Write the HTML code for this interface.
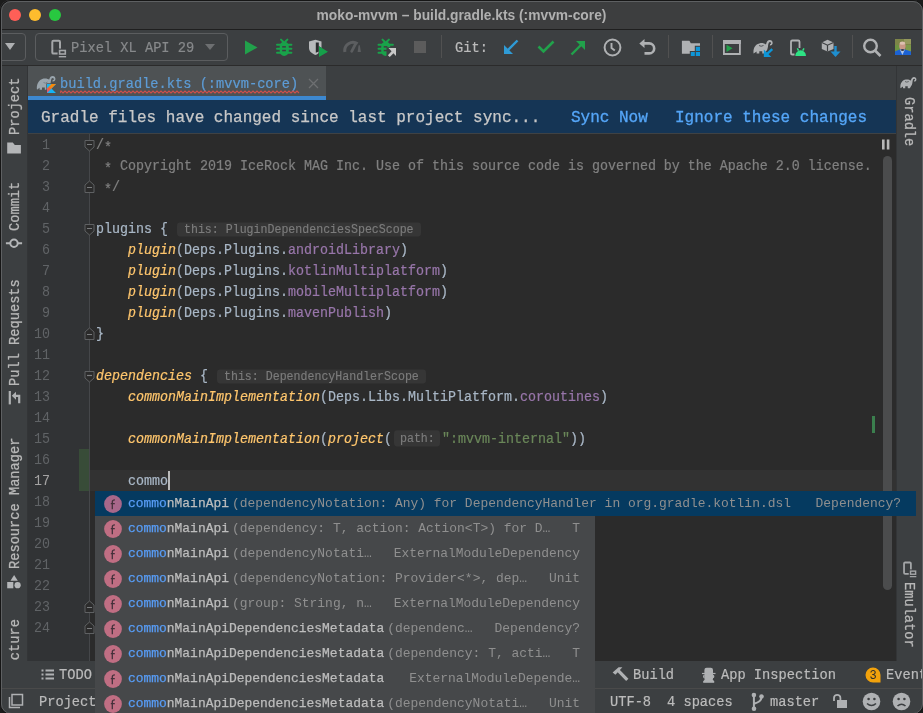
<!DOCTYPE html>
<html><head><meta charset="utf-8">
<style>
*{margin:0;padding:0;box-sizing:border-box}
html,body{width:923px;height:713px;overflow:hidden;background:#1c1c1c}
body{position:relative;font-family:"Liberation Mono",monospace;}
.a{position:absolute}
#win{will-change:transform;position:absolute;left:0;top:0;width:923px;height:713px;background:#3c3f41;border-radius:10px;overflow:hidden}
#wborder{position:absolute;left:1px;top:1px;width:922px;height:713px;border-radius:10px;border:1.5px solid #5e6062;box-shadow:0 0 0 1px #161616}
#title{left:0;top:0;width:923px;height:29px;background:#3d3e3f}
#titlesep{left:0;top:29px;width:923px;height:1px;background:#1f1f1f}
.tl{width:12px;height:12px;border-radius:50%;top:9px}
#ttext{left:0;top:7.5px;width:923px;text-align:center;font-family:"Liberation Sans",sans-serif;font-weight:bold;font-size:13.8px;color:#b0b0b0;letter-spacing:0}
#toolbar{left:0;top:30px;width:923px;height:35px;background:#3c3f41}
#tbsep{left:0;top:65px;width:923px;height:1px;background:#2b2b2b}
.combo{border:1px solid #5b5d5f;border-radius:4px;top:33px;height:28px}
.ui{font-family:"Liberation Mono",monospace;font-size:13.7px;white-space:pre;transform:scaleY(1.1);transform-origin:0 13px;-webkit-text-stroke:0.2px}
.vsep{width:1px;background:#515151}
/* stripes */
#lstripe{left:0;top:66px;width:27px;height:595px;background:#3c3f41}
#lsep{left:27px;top:66px;width:1px;height:595px;background:#333537}
#rstripe{left:897px;top:66px;width:26px;height:595px;background:#3c3f41}
#rsep{left:896px;top:66px;width:1px;height:595px;background:#333537}
.vtxt{font-family:"Liberation Mono",monospace;font-size:13.7px;color:#b8b8b8;-webkit-text-stroke:0.25px;white-space:pre;transform-origin:0 0}
/* tabs */
#tabbar{left:28px;top:66px;width:868px;height:34px;background:#3c3f41}
#tab{left:28px;top:66px;width:298px;height:30px;background:#4e5254}
#tabul{left:28px;top:96px;width:298px;height:4px;background:#3d88d0}
#banner{left:28px;top:100px;width:868px;height:33px;background:#153555}
#bannersep{left:28px;top:133px;width:868px;height:1px;background:#3f4244}
/* editor */
#gutter{left:28px;top:134px;width:61px;height:527px;background:#313335}
#editor{left:89px;top:134px;width:807px;height:527px;background:#2b2b2b}
.ln{position:absolute;left:28px;width:22px;transform:scaleY(1.16);transform-origin:0 14px;text-align:right;font-size:13.33px;color:#606366;font-family:"Liberation Mono",monospace}
.cl{position:absolute;left:96px;transform:scaleY(1.16);transform-origin:0 14px;-webkit-text-stroke:0.2px;font-size:13.33px;color:#a9b7c6;white-space:pre;font-family:"Liberation Mono",monospace}
.fn{color:#ffc66d;font-style:italic}
.pr{color:#9876aa}
.st{color:#6a8759}
.cm{color:#808080}
.hint{display:inline-block;background:#363636;color:#7c7c7c;font-size:11.6px;border-radius:3px;vertical-align:0px;line-height:11.6px;padding:0 7px;margin-left:1px;-webkit-text-stroke:0.15px}
/* popup */
#popup{left:95px;top:491px;width:500px;height:222px;background:#46484a}
.row{position:absolute;left:95px;height:25px;font-size:12.95px;white-space:pre;font-family:"Liberation Mono",monospace}
.ic{position:absolute;left:9px;top:4px;width:17px;height:17px;border-radius:50%;background:#c06a7e;color:#3a2a2e;font-size:12px;text-align:center;line-height:17px}
.m{color:#589df6;-webkit-text-stroke:0.25px}
.nm{color:#bdbdbd;-webkit-text-stroke:0.25px}
.pa{color:#8f8f8f}
.ty{position:absolute;color:#8f8f8f}
/* bottom */
#bottombar{left:0;top:661px;width:923px;height:27px;background:#3c3f41}
#bbsep{left:0;top:661px;width:923px;height:1px;background:#323232}
#status{left:0;top:689px;width:923px;height:24px;background:#3c3f41}
#stsep{left:0;top:688px;width:923px;height:1px;background:#4a4a4a}
</style></head>
<body>
<div id="win">
<div class="a" id="title"></div>
<div class="a" id="titlesep"></div>
<div class="a tl" style="left:9px;background:#ff5f57"></div>
<div class="a tl" style="left:29px;background:#febc2e"></div>
<div class="a tl" style="left:49px;background:#28c840"></div>
<div class="a" id="ttext">moko-mvvm – build.gradle.kts (:mvvm-core)</div>

<div class="a" id="toolbar"></div>
<div class="a" id="tbsep"></div>

<div class="a combo" style="left:-6px;width:32px"></div>
<svg class="a" style="left:5px;top:43px" width="11" height="8"><path d="M0 0H10L5 7Z" fill="#aeb0b2"/></svg>
<div class="a combo" style="left:35px;width:193px"></div>
<svg class="a" style="left:50px;top:38px" width="18" height="21" viewBox="0 0 18 21"><rect x="2.3" y="2.8" width="7.7" height="12.8" rx="1.2" fill="none" stroke="#a4a6a8" stroke-width="2"/><rect x="7.6" y="10.6" width="10" height="10" fill="#3c3f41"/><rect x="9.6" y="12.5" width="5.7" height="3.5" fill="none" stroke="#a4a6a8" stroke-width="1.6"/><rect x="8.8" y="18" width="7.3" height="1.4" fill="#a4a6a8"/></svg>
<div class="a ui" style="left:71px;top:40px;line-height:18px;color:#87898b">Pixel XL API 29</div>
<svg class="a" style="left:205px;top:44px" width="11" height="7"><path d="M0 0H10L5 6Z" fill="#6d6f71"/></svg>
<svg class="a" style="left:244px;top:40px" width="14" height="15"><path d="M1 0.5L13.5 7.5L1 14.5Z" fill="#21a14b"/></svg>
<svg class="a" style="left:276px;top:38px" width="17" height="19" viewBox="0 0 17 19"><path d="M5 1.6L7.2 3.8M11.4 1.6L9.2 3.8" stroke="#19a24a" stroke-width="2" stroke-linecap="round"/>
 <path d="M3.7 9C3.7 5.5 5.5 3.7 8.2 3.7C10.9 3.7 12.8 5.5 12.8 9V13C12.8 16 10.8 17.9 8.2 17.9C5.6 17.9 3.7 16 3.7 13Z" fill="#19a24a"/>
 <path d="M1 6.8H15.4M1 10.8H15.4M1 14.8H15.4" stroke="#19a24a" stroke-width="2" stroke-linecap="round"/>
 <rect x="6.2" y="8.1" width="3.7" height="1.5" fill="#3c3f41"/><rect x="6.2" y="11.8" width="3.7" height="1.5" fill="#3c3f41"/></svg>
<svg class="a" style="left:308px;top:39px" width="21" height="19" viewBox="0 0 21 19"><path d="M1 2.5L7.5 0.8L13.5 2.5V9C13.5 12.5 11 14.6 7.5 16C4 14.6 1 12.5 1 9Z" fill="#b8babc"/><path d="M7.8 3.4H10.8V12.6L7.8 13.8Z" fill="#2a2c2e"/><path d="M10.5 7L10.5 18.2L20 12.7Z" fill="#3c3f41"/><path d="M11 7.3V18.1L20 12.7Z" fill="#16a04a"/></svg>
<svg class="a" style="left:342px;top:40px" width="20" height="14"><path d="M2.9 12A8.2 8.2 0 0 1 15.6 3.8" fill="none" stroke="#5c5e60" stroke-width="3"/><path d="M15.6 12L16.6 5.2H17.8L18.9 12Z" fill="#5c5e60"/><path d="M9.7 11.3L13.3 4.3" stroke="#5c5e60" stroke-width="2.8" stroke-linecap="round"/></svg>
<svg class="a" style="left:377px;top:38px" width="21" height="20" viewBox="0 0 21 20"><g transform="translate(0.5 0)"><path d="M5 1.6L7.2 3.8M11.4 1.6L9.2 3.8" stroke="#19a24a" stroke-width="2" stroke-linecap="round"/>
 <path d="M3.7 9C3.7 5.5 5.5 3.7 8.2 3.7C10.9 3.7 12.8 5.5 12.8 9V13C12.8 16 10.8 17.9 8.2 17.9C5.6 17.9 3.7 16 3.7 13Z" fill="#19a24a"/>
 <path d="M1 6.8H15.4M1 10.8H15.4M1 14.8H15.4" stroke="#19a24a" stroke-width="2" stroke-linecap="round"/>
 <rect x="6.2" y="8.1" width="3.7" height="1.5" fill="#3c3f41"/><rect x="6.2" y="11.8" width="3.7" height="1.5" fill="#3c3f41"/></g><path d="M9.5 9.3H21V20H9.5Z" fill="#3c3f41"/><path d="M11.5 10.1H19V17.9Z" fill="#c8c8c8"/><path d="M11.8 18.2L16.3 13.5" stroke="#c8c8c8" stroke-width="2.6"/></svg>
<div class="a" style="left:414px;top:41px;width:12px;height:12px;background:#5c5c5c"></div>
<div class="a vsep" style="left:441px;top:35px;height:23px"></div>
<div class="a ui" style="left:455px;top:40px;line-height:18px;color:#bbbbbb">Git:</div>
<svg class="a" style="left:503px;top:39px" width="16" height="16" viewBox="0 0 16 16">
 <path d="M14.5 1.5L3 13" stroke="#2f9bd6" stroke-width="2.4"/><path d="M1 6V15H10Z" fill="#2f9bd6"/>
</svg>
<svg class="a" style="left:537px;top:40px" width="18" height="14" viewBox="0 0 18 14">
 <path d="M1.5 6.5L6.5 11.5L16.5 1.5" fill="none" stroke="#21a14b" stroke-width="2.6"/>
</svg>
<svg class="a" style="left:570px;top:40px" width="16" height="16" viewBox="0 0 16 16">
 <path d="M1.5 14.5L12.5 3.5" stroke="#21a14b" stroke-width="2.4"/><path d="M6 1H15V10Z" fill="#21a14b"/>
</svg>
<svg class="a" style="left:603px;top:38px" width="19" height="19" viewBox="0 0 19 19">
 <circle cx="9.5" cy="9.5" r="7.9" fill="none" stroke="#afb1b3" stroke-width="2"/>
 <path d="M8.5 5V10L11.8 12.5" fill="none" stroke="#afb1b3" stroke-width="1.9"/>
</svg>
<svg class="a" style="left:638px;top:37px" width="19" height="19"><path d="M1.3 6.4L6.5 1.9V11Z" fill="#afb1b3"/><path d="M6 6.4H11.2A5 5 0 0 1 11.2 16.4H6.5" fill="none" stroke="#afb1b3" stroke-width="2.6"/></svg>
<div class="a vsep" style="left:668px;top:35px;height:23px"></div>
<svg class="a" style="left:681px;top:40px" width="20" height="17"><path d="M0.9 0.7H8.4L9.8 3.2H19V5.8H13.8V11H8.8V13.7H0.9Z" fill="#afb1b3"/><rect x="14.8" y="6.8" width="4.2" height="4.2" fill="#0d96d8"/><rect x="9.8" y="12" width="4" height="4" fill="#0d96d8"/><rect x="14.8" y="12" width="4.2" height="4" fill="#0d96d8"/></svg>
<div class="a vsep" style="left:712px;top:35px;height:23px"></div>
<svg class="a" style="left:723px;top:40px" width="18" height="15"><path d="M0.9 0.9H16.9V14H0.9Z" fill="none" stroke="#afb1b3" stroke-width="1.8"/><rect x="0" y="0" width="17.8" height="4" fill="#afb1b3"/><path d="M3.5 4.7L9.6 8.3L3.5 11.9Z" fill="#21a14b"/></svg>
<svg class="a" style="left:753px;top:39px" width="21" height="19" viewBox="0 0 21 19">
 <path d="M0.6 14.5C-0.2 9.5 2.3 5 7 4.2C9.5 3.8 11.5 4.6 13 5.4C13.6 2.4 15 1 16.8 1C18.8 1 20 2.7 19.6 4.6C19.3 6.1 18 6.8 16.8 6.5L17.1 5C17.8 5.1 18.2 4.6 18 3.9C17.7 2.9 16.5 2.8 15.8 3.8C14.8 5.5 15.3 8 14.3 10.5L11.8 14.5H9.3V12.2H6.3V14.5H3.6V12.5Z" fill="#afb1b3"/>
 <path d="M6 6.5Q8 8 10.5 6.5" fill="none" stroke="#3c3f41" stroke-width="0.8"/>
 <path d="M19.5 10L12.5 16.5" stroke="#3c3f41" stroke-width="4.5"/>
 <path d="M19.3 10.2L13.3 15.7" stroke="#0d96d8" stroke-width="2.4"/><path d="M10.8 10.6V18.1H18.3Z" fill="#0d96d8"/>
</svg>
<svg class="a" style="left:789px;top:39px" width="19" height="18"><rect x="2" y="1.5" width="8.5" height="14" rx="1.3" fill="none" stroke="#afb1b3" stroke-width="1.8"/><rect x="5.5" y="9" width="13" height="9" fill="#3c3f41"/><path d="M6.3 16.9A5.35 5.6 0 0 1 17 16.9Z" fill="#2ee384"/><path d="M8.3 9.3L9.6 11.6M15 9.3L13.7 11.6" stroke="#2ee384" stroke-width="1.5"/></svg>
<svg class="a" style="left:821px;top:39px" width="21" height="19" viewBox="0 0 21 19">
 <path d="M6.5 0.8L12.5 3.5V10L6.5 12.5L0.8 10V3.5Z" fill="#afb1b3"/>
 <path d="M0.8 3.5L6.5 6.2L12.5 3.5M6.5 6.2V12.5" stroke="#3c3f41" stroke-width="1.2" fill="none"/>
 <path d="M14.5 7V16" stroke="#1e8fd0" stroke-width="2.4"/><path d="M9.5 12.5H19.5L14.5 18Z" fill="#1e8fd0"/>
</svg>
<div class="a vsep" style="left:852px;top:35px;height:23px"></div>
<svg class="a" style="left:862px;top:38px" width="20" height="19" viewBox="0 0 20 19">
 <circle cx="8.5" cy="8" r="6.3" fill="none" stroke="#afb1b3" stroke-width="2.4"/>
 <path d="M13 12.5L18.5 18" stroke="#afb1b3" stroke-width="2.6"/>
</svg>
<svg class="a" style="left:895px;top:39px;filter:blur(0.5px)" width="16" height="16" viewBox="0 0 16 16"><defs><filter id="bl" x="0" y="0" width="1" height="1"><feGaussianBlur stdDeviation="0.45"/></filter><clipPath id="avc"><rect width="16" height="16"/></clipPath></defs>
<g clip-path="url(#avc)"><rect width="16" height="16" fill="#7d8548"/><g filter="url(#bl)"><rect x="9" y="0" width="7" height="5" fill="#94985c"/><rect x="0" y="6" width="5" height="6" fill="#6e9442"/><rect x="11" y="6" width="5" height="6" fill="#7c9a4a"/>
<ellipse cx="7.4" cy="7" rx="3.2" ry="4.1" fill="#c89886"/><ellipse cx="7.4" cy="4.2" rx="2.8" ry="1.6" fill="#dcc0b0"/>
<path d="M0 16V12.5C2 11 4.5 10.4 7.4 10.4S13 11 16 12.5V16Z" fill="#1f62d4"/><path d="M5 10.7L7.4 16L9.8 10.7Z" fill="#b0c8e8"/><ellipse cx="7.5" cy="11" rx="1.6" ry="0.9" fill="#3a3a44"/></g></g></svg>



<div class="a" id="lstripe"></div><div class="a" id="lsep"></div>
<div class="a" id="rstripe"></div><div class="a" id="rsep"></div>

<div class="a vtxt" style="left:8px;top:135px;transform:rotate(-90deg) scaleY(1.12);line-height:13px">Project</div>
<svg class="a" style="left:7px;top:142px" width="15" height="13"><path d="M0.2 0.6H5.8L7.8 3H13.9V11.5H0.2Z" fill="#b4b6b8"/></svg>
<div class="a vtxt" style="left:8px;top:231px;transform:rotate(-90deg) scaleY(1.12);line-height:13px">Commit</div>
<svg class="a" style="left:5px;top:236px" width="18" height="15"><circle cx="9" cy="7.3" r="3.7" fill="none" stroke="#b4b6b8" stroke-width="2"/><path d="M0.9 7.3H5.3M12.7 7.3H17.1" stroke="#b4b6b8" stroke-width="2"/></svg>
<div class="a vtxt" style="left:8px;top:386px;transform:rotate(-90deg) scaleY(1.12);line-height:13px">Pull Requests</div>
<svg class="a" style="left:7px;top:390px" width="15" height="16"><path d="M2.8 1V14.4" stroke="#afb1b3" stroke-width="2.2"/><path d="M4.8 5.8L9 1.8V9.8Z" fill="#afb1b3"/><path d="M8 5.8H12.2V13.2" fill="none" stroke="#afb1b3" stroke-width="2.2"/></svg>
<div class="a vtxt" style="left:8px;top:569px;transform:rotate(-90deg) scaleY(1.12);line-height:13px">Resource Manager</div>
<svg class="a" style="left:7px;top:574px" width="15" height="16"><path d="M7.1 1L10.8 6.8H3.5Z" fill="#b4b6b8"/><rect x="0.2" y="8" width="6.1" height="6.3" fill="#b4b6b8"/><circle cx="10.6" cy="11.2" r="3.1" fill="#b4b6b8"/></svg>
<div class="a" style="left:0;top:600px;width:27px;height:61px;overflow:hidden"><div class="a vtxt" style="left:8px;top:93px;transform:rotate(-90deg) scaleY(1.12);line-height:13px">Structure</div></div>
<svg class="a" style="left:900px;top:76px" width="17.5" height="16" viewBox="0 0 21 19"><path d="M0.6 14.5C-0.2 9.5 2.3 5 7 4.2C9.5 3.8 11.5 4.6 13 5.4C13.6 2.4 15 1 16.8 1C18.8 1 20 2.7 19.6 4.6C19.3 6.1 18 6.8 16.8 6.5L17.1 5C17.8 5.1 18.2 4.6 18 3.9C17.7 2.9 16.5 2.8 15.8 3.8C14.8 5.5 15.3 8 14.3 10.5L11.8 14.5H9.3V12.2H6.3V14.5H3.6V12.5Z" fill="#afb1b3"/><path d="M6 6.5Q8 8 10.5 6.5" fill="none" stroke="#3c3f41" stroke-width="0.8"/></svg>
<div class="a vtxt" style="left:916px;top:97px;transform:rotate(90deg) scaleY(1.12);line-height:13px">Gradle</div>
<svg class="a" style="left:902px;top:560px" width="16" height="18.7" viewBox="0 0 18 21"><rect x="2.3" y="2.8" width="7.7" height="12.8" rx="1.2" fill="none" stroke="#a4a6a8" stroke-width="2"/><rect x="7.6" y="10.6" width="10" height="10" fill="#3c3f41"/><rect x="9.6" y="12.5" width="5.7" height="3.5" fill="none" stroke="#a4a6a8" stroke-width="1.6"/><rect x="8.8" y="18" width="7.3" height="1.4" fill="#a4a6a8"/></svg>
<div class="a vtxt" style="left:916px;top:582px;transform:rotate(90deg) scaleY(1.12);line-height:13px">Emulator</div>


<div class="a" id="tabbar"></div>
<div class="a" id="tab"></div>
<div class="a" id="tabul"></div>
<div class="a" id="banner"></div>
<div class="a" id="bannersep"></div>

<div class="a" id="gutter"></div>
<div class="a" id="editor"></div>
<div class="a" style="left:89px;top:470px;width:807px;height:21px;background:#323232"></div>
<div class="a" style="left:79px;top:449px;width:10px;height:42px;background:#384c38"></div>
<div class="ln" style="top:135px;line-height:21px;color:#606366">1</div>
<div class="cl" style="top:135px;line-height:21px"><span class="cm">/<span style="position:relative;top:2.5px">*</span></span></div>
<div class="ln" style="top:156px;line-height:21px;color:#606366">2</div>
<div class="cl" style="top:156px;line-height:21px"><span class="cm"> <span style="position:relative;top:2.5px">*</span> Copyright 2019 IceRock MAG Inc. Use of this source code is governed by the Apache 2.0 license.</span></div>
<div class="ln" style="top:177px;line-height:21px;color:#606366">3</div>
<div class="cl" style="top:177px;line-height:21px"><span class="cm"> <span style="position:relative;top:2.5px">*</span>/</span></div>
<div class="ln" style="top:198px;line-height:21px;color:#606366">4</div>
<div class="ln" style="top:219px;line-height:21px;color:#606366">5</div>
<div class="cl" style="top:219px;line-height:21px">plugins { <span class="hint">this: PluginDependenciesSpecScope</span></div>
<div class="ln" style="top:240px;line-height:21px;color:#606366">6</div>
<div class="cl" style="top:240px;line-height:21px">    <span class="fn">plugin</span>(Deps.Plugins.<span class="pr">androidLibrary</span>)</div>
<div class="ln" style="top:261px;line-height:21px;color:#606366">7</div>
<div class="cl" style="top:261px;line-height:21px">    <span class="fn">plugin</span>(Deps.Plugins.<span class="pr">kotlinMultiplatform</span>)</div>
<div class="ln" style="top:282px;line-height:21px;color:#606366">8</div>
<div class="cl" style="top:282px;line-height:21px">    <span class="fn">plugin</span>(Deps.Plugins.<span class="pr">mobileMultiplatform</span>)</div>
<div class="ln" style="top:303px;line-height:21px;color:#606366">9</div>
<div class="cl" style="top:303px;line-height:21px">    <span class="fn">plugin</span>(Deps.Plugins.<span class="pr">mavenPublish</span>)</div>
<div class="ln" style="top:324px;line-height:21px;color:#606366">10</div>
<div class="cl" style="top:324px;line-height:21px">}</div>
<div class="ln" style="top:345px;line-height:21px;color:#606366">11</div>
<div class="ln" style="top:366px;line-height:21px;color:#606366">12</div>
<div class="cl" style="top:366px;line-height:21px"><span class="fn">dependencies</span> { <span class="hint">this: DependencyHandlerScope</span></div>
<div class="ln" style="top:387px;line-height:21px;color:#606366">13</div>
<div class="cl" style="top:387px;line-height:21px">    <span class="fn">commonMainImplementation</span>(Deps.Libs.MultiPlatform.<span class="pr">coroutines</span>)</div>
<div class="ln" style="top:408px;line-height:21px;color:#606366">14</div>
<div class="ln" style="top:429px;line-height:21px;color:#606366">15</div>
<div class="cl" style="top:429px;line-height:21px">    <span class="fn">commonMainImplementation</span>(<span class="fn">project</span>(<span class="hint" style="line-height:14.6px;padding:0 5px 0 6px;margin-left:2px;margin-right:2.2px;vertical-align:1.5px">path:</span><span class="st">":mvvm-internal"</span>))</div>
<div class="ln" style="top:450px;line-height:21px;color:#606366">16</div>
<div class="ln" style="top:471px;line-height:21px;color:#a4a3a3">17</div>
<div class="cl" style="top:471px;line-height:21px">    commo</div>
<div class="ln" style="top:492px;line-height:21px;color:#606366">18</div>
<div class="ln" style="top:513px;line-height:21px;color:#606366">19</div>
<div class="ln" style="top:534px;line-height:21px;color:#606366">20</div>
<div class="ln" style="top:555px;line-height:21px;color:#606366">21</div>
<div class="ln" style="top:576px;line-height:21px;color:#606366">22</div>
<div class="ln" style="top:597px;line-height:21px;color:#606366">23</div>
<div class="ln" style="top:618px;line-height:21px;color:#606366">24</div>
<div class="a" style="left:168px;top:471px;width:2px;height:19px;background:#bbbbbb"></div>

<!-- tab -->
<svg class="a" style="left:36px;top:75px" width="21" height="19" viewBox="0 0 21 19"><defs><linearGradient id="kg" x1="0" y1="1" x2="1" y2="0"><stop offset="0" stop-color="#e44890"/><stop offset="0.35" stop-color="#f0603a"/><stop offset="0.6" stop-color="#f88909"/></linearGradient></defs>
<path d="M1 14.8C0.2 10 2.5 4.8 7.5 3.6C10 3 12 3.8 13.2 4.6C13.8 2 15 1 16.6 1C18.6 1 19.8 2.6 19.4 4.6C19.1 6.2 17.6 6.8 16.4 6.4L16.8 5C17.6 5.2 18 4.6 17.8 3.8C17.5 2.8 16.2 2.6 15.6 3.6C14.6 5.4 15 8 14 10.5L11 14.8H8.8V12.5H6V14.8H3.6V12.8Z" fill="#9aa5ad"/>
<path d="M7.5 7.5Q9.5 9 11.5 7" fill="none" stroke="#6f7a82" stroke-width="0.8"/>
<rect x="10.3" y="8.3" width="10.3" height="10.4" fill="#4e5254"/>
<path d="M11 9H20L15.5 13.6L20 18.1H11Z" fill="#14b4f4"/>
<path d="M15.4 9H20L11 18.1V13.5Z" fill="url(#kg)"/>
</svg>
<div class="a ui" style="left:60px;top:76px;line-height:18px;color:#5d9cd6">build.gradle.kts (:mvvm-core)</div>
<svg class="a" style="left:60px;top:90px" width="240" height="5"><path d="M0 3 L1 1 L3 3 L5 1 L7 3 L9 1 L11 3 L13 1 L15 3 L17 1 L19 3 L21 1 L23 3 L25 1 L27 3 L29 1 L31 3 L33 1 L35 3 L37 1 L39 3 L41 1 L43 3 L45 1 L47 3 L49 1 L51 3 L53 1 L55 3 L57 1 L59 3 L61 1 L63 3 L65 1 L67 3 L69 1 L71 3 L73 1 L75 3 L77 1 L79 3 L81 1 L83 3 L85 1 L87 3 L89 1 L91 3 L93 1 L95 3 L97 1 L99 3 L101 1 L103 3 L105 1 L107 3 L109 1 L111 3 L113 1 L115 3 L117 1 L119 3 L121 1 L123 3 L125 1 L127 3 L129 1 L131 3 L133 1 L135 3 L137 1 L139 3 L141 1 L143 3 L145 1 L147 3 L149 1 L151 3 L153 1 L155 3 L157 1 L159 3 L161 1 L163 3 L165 1 L167 3 L169 1 L171 3 L173 1 L175 3 L177 1 L179 3 L181 1 L183 3 L185 1 L187 3 L189 1 L191 3 L193 1 L195 3 L197 1 L199 3 L201 1 L203 3 L205 1 L207 3 L209 1 L211 3 L213 1 L215 3 L217 1 L219 3 L221 1 L223 3 L225 1 L227 3 L229 1 L231 3 L233 1 L235 3 L237 1 L239 3" fill="none" stroke="#cf4f4a" stroke-width="1.1"/></svg>
<svg class="a" style="left:308px;top:78px" width="11" height="11"><path d="M1 1L10 10M10 1L1 10" stroke="#6e7072" stroke-width="1.3"/></svg>
<!-- banner -->
<div class="a" style="left:41px;top:108px;font-size:16px;line-height:21px;color:#c8c8c8;white-space:pre;-webkit-text-stroke:0.25px">Gradle files have changed since last project sync...</div>
<div class="a" style="left:571px;top:108px;font-size:16px;line-height:21px;color:#55a6f8;white-space:pre;-webkit-text-stroke:0.3px">Sync Now</div>
<div class="a" style="left:675px;top:108px;font-size:16px;line-height:21px;color:#55a6f8;white-space:pre;-webkit-text-stroke:0.3px">Ignore these changes</div>
<!-- editor extras -->
<div class="a" style="left:88.5px;top:134px;width:1.6px;height:527px;background:#45474a"></div>
<svg class="a" style="left:881px;top:139px" width="10" height="11"><rect x="1" y="0.5" width="2.6" height="10" fill="#b8b8b8"/><rect x="5.8" y="0.5" width="2.6" height="10" fill="#b8b8b8"/></svg>
<div class="a" style="left:883px;top:156px;width:9px;height:434px;border-radius:4.5px;background:#4b4c4d"></div>
<div class="a" style="left:872px;top:416px;width:3px;height:17px;background:#3b7f4e"></div>
<svg class="a" style="left:84px;top:140px" width="11" height="13" viewBox="0 0 11 13"><path d="M1 0.5H10V7L5.5 11L1 7Z" fill="#2b2b2b" stroke="#5f6163" stroke-width="1"/><path d="M3 4.5H8" stroke="#7a7c7e" stroke-width="1.2"/></svg>
<svg class="a" style="left:84px;top:224px" width="11" height="13" viewBox="0 0 11 13"><path d="M1 0.5H10V7L5.5 11L1 7Z" fill="#2b2b2b" stroke="#5f6163" stroke-width="1"/><path d="M3 4.5H8" stroke="#7a7c7e" stroke-width="1.2"/></svg>
<svg class="a" style="left:84px;top:371px" width="11" height="13" viewBox="0 0 11 13"><path d="M1 0.5H10V7L5.5 11L1 7Z" fill="#2b2b2b" stroke="#5f6163" stroke-width="1"/><path d="M3 4.5H8" stroke="#7a7c7e" stroke-width="1.2"/></svg>
<svg class="a" style="left:84px;top:180px" width="11" height="13" viewBox="0 0 11 13"><path d="M1 12.5H10V5L5.5 1L1 5Z" fill="#2b2b2b" stroke="#5f6163" stroke-width="1"/><path d="M3 7.5H8" stroke="#7a7c7e" stroke-width="1"/></svg>
<svg class="a" style="left:84px;top:327px" width="11" height="13" viewBox="0 0 11 13"><path d="M1 12.5H10V5L5.5 1L1 5Z" fill="#2b2b2b" stroke="#5f6163" stroke-width="1"/><path d="M3 7.5H8" stroke="#7a7c7e" stroke-width="1"/></svg>
<svg class="a" style="left:84px;top:600px" width="11" height="13" viewBox="0 0 11 13"><path d="M1 12.5H10V5L5.5 1L1 5Z" fill="#2b2b2b" stroke="#5f6163" stroke-width="1"/><path d="M3 7.5H8" stroke="#7a7c7e" stroke-width="1"/></svg>
<svg class="a" style="left:84px;top:621px" width="11" height="13" viewBox="0 0 11 13"><path d="M1 12.5H10V5L5.5 1L1 5Z" fill="#2b2b2b" stroke="#5f6163" stroke-width="1"/><path d="M3 7.5H8" stroke="#7a7c7e" stroke-width="1"/></svg>

<div class="a" id="bottombar"></div>
<div class="a" id="status"></div>
<div class="a" id="stsep"></div>

<svg class="a" style="left:41px;top:669px" width="14" height="12"><path d="M0.5 1.5H2.5M0.5 5.5H2.5M0.5 9.5H2.5M4.5 1.5H13M4.5 5.5H13M4.5 9.5H13" stroke="#afb1b3" stroke-width="2"/></svg>
<div class="a ui" style="left:59px;top:667px;line-height:18px;color:#bbbbbb">TODO</div>
<svg class="a" style="left:612px;top:666px" width="17" height="16"><path d="M0.6 6.4L6.6 1.2H10.4L3.4 8.8Z" fill="#afb1b3"/><path d="M6.3 4.6L15.3 13.8" stroke="#afb1b3" stroke-width="3.2"/></svg>
<div class="a ui" style="left:633px;top:667px;line-height:18px;color:#bbbbbb">Build</div>
<svg class="a" style="left:701px;top:666px" width="16" height="18"><path d="M3.4 4Q3.4 1.8 5.6 1.8H9.8Q12 1.8 12 4V13.5H3.4Z" fill="#afb1b3"/><path d="M1 7.5H14.5" stroke="#afb1b3" stroke-width="1.2"/><path d="M3.4 9.2Q2 10.5 3.4 11.8M12 9.2Q13.4 10.5 12 11.8" stroke="#afb1b3" stroke-width="1.3" fill="none"/><path d="M4.2 13L2.2 15.2H13.2L11.2 13Z" fill="#afb1b3"/><rect x="2.2" y="15" width="11" height="1.8" fill="#afb1b3"/></svg>
<div class="a ui" style="left:721px;top:667px;line-height:18px;color:#bbbbbb">App Inspection</div>
<svg class="a" style="left:865px;top:667px" width="17" height="17"><path d="M8 0.5A7.5 7.5 0 1 0 8 15.5H15.5V8A7.5 7.5 0 0 0 8 0.5Z" fill="#f2a20c"/><text x="8.2" y="12.3" font-family="Liberation Mono" font-size="12" fill="#2b2b2b" text-anchor="middle">3</text></svg>
<div class="a ui" style="left:886px;top:667px;line-height:18px;color:#bbbbbb">Event Log</div>
<svg class="a" style="left:8px;top:693px" width="16" height="16"><path d="M4 1.5H14.5V12H4Z" fill="none" stroke="#afb1b3" stroke-width="1.5"/><path d="M1.5 4V14.5H12" fill="none" stroke="#afb1b3" stroke-width="1.5"/></svg>
<div class="a ui" style="left:39px;top:694px;line-height:18px;color:#bbbbbb">Project configuration</div>
<div class="a ui" style="left:610px;top:694px;line-height:18px;color:#bbbbbb">UTF-8</div>
<div class="a ui" style="left:667px;top:694px;line-height:18px;color:#bbbbbb">4 spaces</div>
<svg class="a" style="left:750px;top:691px" width="15" height="21"><circle cx="3.9" cy="4" r="2.3" fill="#afb1b3"/><circle cx="11.5" cy="5.5" r="2.3" fill="#afb1b3"/><circle cx="4" cy="17.7" r="2.3" fill="#afb1b3"/><path d="M3.9 4V17.7M11.5 5.5C11.5 10 8.5 11.3 4 12.8" fill="none" stroke="#afb1b3" stroke-width="2"/></svg>
<div class="a ui" style="left:770px;top:694px;line-height:18px;color:#bbbbbb">master</div>
<svg class="a" style="left:832px;top:693px" width="16" height="16"><path d="M2 8V5A3.2 3.2 0 0 1 8.4 5V7" fill="none" stroke="#afb1b3" stroke-width="1.8"/><rect x="5" y="7" width="10" height="8" fill="#afb1b3"/></svg>
<svg class="a" style="left:862px;top:692px" width="19" height="19"><circle cx="9.5" cy="9.5" r="8.8" fill="#afb1b3"/><circle cx="6.6" cy="7" r="1.3" fill="#3c3f41"/><circle cx="12.4" cy="7" r="1.3" fill="#3c3f41"/><path d="M5 11.5Q9.5 15.5 14 11.5" fill="none" stroke="#3c3f41" stroke-width="1.6"/></svg>
<svg class="a" style="left:892px;top:692px" width="19" height="19"><circle cx="9.5" cy="9.5" r="8.8" fill="#afb1b3"/><circle cx="6.6" cy="7" r="1.3" fill="#3c3f41"/><circle cx="12.4" cy="7" r="1.3" fill="#3c3f41"/><path d="M5.5 14Q9.5 10.5 13.5 14" fill="none" stroke="#3c3f41" stroke-width="1.6"/></svg>
<div class="a" id="popup"></div>
<div class="a" style="left:95px;top:491px;width:821px;height:25px;background:#053a60"></div>
<div class="row" style="top:491px;width:820px;line-height:25px"><svg class="a" style="left:9px;top:3.5px" width="18" height="18" viewBox="0 0 18 18"><circle cx="9" cy="9" r="8.9" fill="#a8678a"/><path d="M8.3 14.2V6.8C8.3 5.4 9 4.9 10.9 4.9M6.8 8.6H10.8" fill="none" stroke="#44303a" stroke-width="1.3"/></svg><span class="a" style="left:33px;top:0"><span class="m">commo</span><span class="nm">nMainApi</span><span class="pa" style="margin-left:3px">(dependencyNotation: Any) for DependencyHandler in org.gradle.kotlin.dsl</span></span></div>
<div class="row ty" style="top:491px;line-height:25px;left:auto;right:22px">Dependency?</div>
<div class="row" style="top:516px;width:500px;line-height:25px"><svg class="a" style="left:9px;top:3.5px" width="18" height="18" viewBox="0 0 18 18"><circle cx="9" cy="9" r="8.9" fill="#c06e83"/><path d="M8.3 14.2V6.8C8.3 5.4 9 4.9 10.9 4.9M6.8 8.6H10.8" fill="none" stroke="#44303a" stroke-width="1.3"/></svg><span class="a" style="left:33px;top:0"><span class="m">commo</span><span class="nm">nMainApi</span><span class="pa" style="margin-left:3px">(dependency: T, action: Action&lt;T&gt;) for D…</span></span></div>
<div class="row ty" style="top:516px;line-height:25px;left:auto;right:343px">T</div>
<div class="row" style="top:541px;width:500px;line-height:25px"><svg class="a" style="left:9px;top:3.5px" width="18" height="18" viewBox="0 0 18 18"><circle cx="9" cy="9" r="8.9" fill="#c06e83"/><path d="M8.3 14.2V6.8C8.3 5.4 9 4.9 10.9 4.9M6.8 8.6H10.8" fill="none" stroke="#44303a" stroke-width="1.3"/></svg><span class="a" style="left:33px;top:0"><span class="m">commo</span><span class="nm">nMainApi</span><span class="pa" style="margin-left:3px">(dependencyNotati…</span></span></div>
<div class="row ty" style="top:541px;line-height:25px;left:auto;right:343px">ExternalModuleDependency</div>
<div class="row" style="top:566px;width:500px;line-height:25px"><svg class="a" style="left:9px;top:3.5px" width="18" height="18" viewBox="0 0 18 18"><circle cx="9" cy="9" r="8.9" fill="#c06e83"/><path d="M8.3 14.2V6.8C8.3 5.4 9 4.9 10.9 4.9M6.8 8.6H10.8" fill="none" stroke="#44303a" stroke-width="1.3"/></svg><span class="a" style="left:33px;top:0"><span class="m">commo</span><span class="nm">nMainApi</span><span class="pa" style="margin-left:3px">(dependencyNotation: Provider&lt;*&gt;, dep…</span></span></div>
<div class="row ty" style="top:566px;line-height:25px;left:auto;right:343px">Unit</div>
<div class="row" style="top:591px;width:500px;line-height:25px"><svg class="a" style="left:9px;top:3.5px" width="18" height="18" viewBox="0 0 18 18"><circle cx="9" cy="9" r="8.9" fill="#c06e83"/><path d="M8.3 14.2V6.8C8.3 5.4 9 4.9 10.9 4.9M6.8 8.6H10.8" fill="none" stroke="#44303a" stroke-width="1.3"/></svg><span class="a" style="left:33px;top:0"><span class="m">commo</span><span class="nm">nMainApi</span><span class="pa" style="margin-left:3px">(group: String, n…</span></span></div>
<div class="row ty" style="top:591px;line-height:25px;left:auto;right:343px">ExternalModuleDependency</div>
<div class="row" style="top:616px;width:500px;line-height:25px"><svg class="a" style="left:9px;top:3.5px" width="18" height="18" viewBox="0 0 18 18"><circle cx="9" cy="9" r="8.9" fill="#c06e83"/><path d="M8.3 14.2V6.8C8.3 5.4 9 4.9 10.9 4.9M6.8 8.6H10.8" fill="none" stroke="#44303a" stroke-width="1.3"/></svg><span class="a" style="left:33px;top:0"><span class="m">commo</span><span class="nm">nMainApiDependenciesMetadata</span><span class="pa" style="margin-left:3px">(dependenc…</span></span></div>
<div class="row ty" style="top:616px;line-height:25px;left:auto;right:343px">Dependency?</div>
<div class="row" style="top:641px;width:500px;line-height:25px"><svg class="a" style="left:9px;top:3.5px" width="18" height="18" viewBox="0 0 18 18"><circle cx="9" cy="9" r="8.9" fill="#c06e83"/><path d="M8.3 14.2V6.8C8.3 5.4 9 4.9 10.9 4.9M6.8 8.6H10.8" fill="none" stroke="#44303a" stroke-width="1.3"/></svg><span class="a" style="left:33px;top:0"><span class="m">commo</span><span class="nm">nMainApiDependenciesMetadata</span><span class="pa" style="margin-left:3px">(dependency: T, acti…</span></span></div>
<div class="row ty" style="top:641px;line-height:25px;left:auto;right:343px">T</div>
<div class="row" style="top:666px;width:500px;line-height:25px"><svg class="a" style="left:9px;top:3.5px" width="18" height="18" viewBox="0 0 18 18"><circle cx="9" cy="9" r="8.9" fill="#c06e83"/><path d="M8.3 14.2V6.8C8.3 5.4 9 4.9 10.9 4.9M6.8 8.6H10.8" fill="none" stroke="#44303a" stroke-width="1.3"/></svg><span class="a" style="left:33px;top:0"><span class="m">commo</span><span class="nm">nMainApiDependenciesMetadata</span><span class="pa" style="margin-left:3px"></span></span></div>
<div class="row ty" style="top:666px;line-height:25px;left:auto;right:343px">ExternalModuleDepende…</div>
<div class="row" style="top:691px;width:500px;line-height:25px"><svg class="a" style="left:9px;top:3.5px" width="18" height="18" viewBox="0 0 18 18"><circle cx="9" cy="9" r="8.9" fill="#c06e83"/><path d="M8.3 14.2V6.8C8.3 5.4 9 4.9 10.9 4.9M6.8 8.6H10.8" fill="none" stroke="#44303a" stroke-width="1.3"/></svg><span class="a" style="left:33px;top:0"><span class="m">commo</span><span class="nm">nMainApiDependenciesMetadata</span><span class="pa" style="margin-left:3px">(dependencyNotati…</span></span></div>
<div class="row ty" style="top:691px;line-height:25px;left:auto;right:343px">Unit</div>

</div>
<div id="wborder"></div>
</body></html>
